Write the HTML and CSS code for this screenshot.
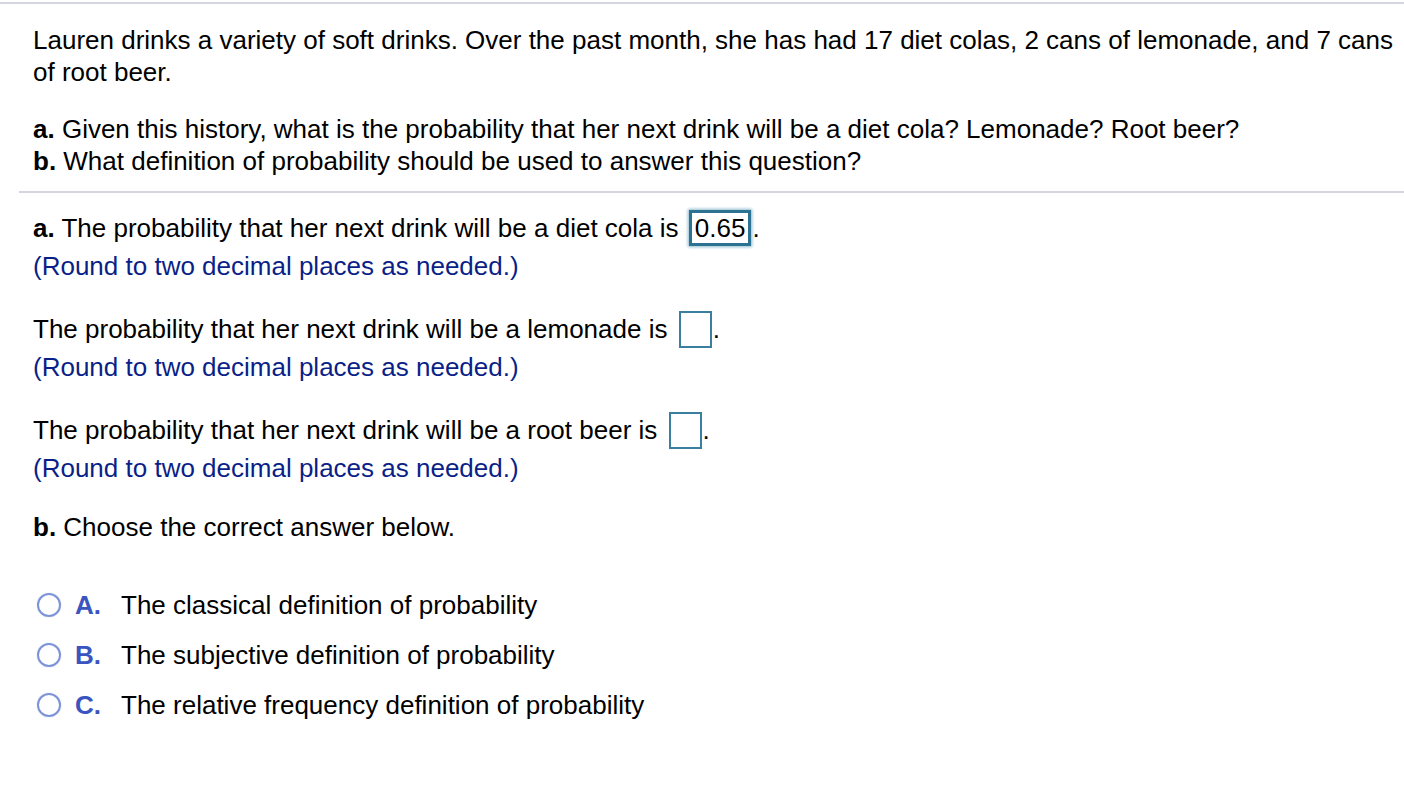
FILE: index.html
```html
<!DOCTYPE html>
<html>
<head>
<meta charset="utf-8">
<link rel="stylesheet" href="styles.css">
</head>
<body>
<div class="page">
  <div class="question">
    <p class="para">Lauren drinks a variety of soft drinks. Over the past month, she has had 17 diet colas, 2 cans of lemonade, and 7 cans of root beer.</p>
    <p class="para parts"><b>a.</b> Given this history, what is the probability that her next drink will be a diet cola? Lemonade? Root beer?<br><b>b.</b> What definition of probability should be used to answer this question?</p>
  </div>
  <div class="answer">
    <div class="item">
      <div class="line"><b>a.</b> The probability that her next drink will be a diet cola is <span class="box filled">0.65</span>.</div>
      <div class="hint">(Round to two decimal places as needed.)</div>
    </div>
    <div class="item">
      <div class="line">The probability that her next drink will be a lemonade is <span class="box"></span>.</div>
      <div class="hint">(Round to two decimal places as needed.)</div>
    </div>
    <div class="item">
      <div class="line">The probability that her next drink will be a root beer is <span class="box"></span>.</div>
      <div class="hint">(Round to two decimal places as needed.)</div>
    </div>
    <div class="line choose"><b>b.</b> Choose the correct answer below.</div>
    <div class="options">
      <div class="opt"><span class="radio"></span><span class="letter">A.</span><span>The classical definition of probability</span></div>
      <div class="opt"><span class="radio"></span><span class="letter">B.</span><span>The subjective definition of probability</span></div>
      <div class="opt"><span class="radio"></span><span class="letter">C.</span><span>The relative frequency definition of probability</span></div>
    </div>
  </div>
</div>
</body>
</html>
```
FILE: styles.css
```css
html, body { margin: 0; padding: 0; background: #fff; }
body {
  font-family: "Liberation Sans", Arial, Helvetica, sans-serif;
  font-size: 26px;
  color: #000;
}
.page {
  border-top: 2px solid #d3d6e0;
  margin-top: 2px;
}
.question {
  margin-left: 19px;
  padding: 20px 10px 14px 14px;
  border-bottom: 2px solid #d3d6e0;
}
.para {
  margin: 0;
  line-height: 32px;
}
.parts { margin-top: 25px; }
.answer { padding-left: 33px; padding-top: 16px; }
.item { margin-bottom: 25px; }
.line { line-height: 38px; }
.hint { color: #0b1f88; line-height: 38px; }
.box {
  display: inline-block;
  vertical-align: middle;
  box-sizing: border-box;
  width: 33px;
  height: 37px;
  border: 2px solid #3a7f9f;
  margin: -4px 1px 0 4px;
  line-height: 32px;
}
.box.filled {
  width: auto;
  height: 36px;
  padding: 0 3px 0 3px;
  border: 3px solid #2e7293;
  box-shadow: 0 0 3px 1px #8bb8cd;
  margin-left: 3px;
  line-height: 30px;
}
.choose { margin-top: -4px; }
.options { margin-top: 34px; }
.opt {
  display: flex;
  align-items: center;
  height: 50px;
}
.radio {
  box-sizing: border-box;
  width: 24px;
  height: 24px;
  border-radius: 50%;
  border: 2px solid #7d93d8;
  box-shadow: 0 0 1px #a9b6e6;
  margin-left: 4px;
  margin-right: 14px;
}
.letter {
  color: #3a55c0;
  font-weight: bold;
  width: 46px;
}
```
